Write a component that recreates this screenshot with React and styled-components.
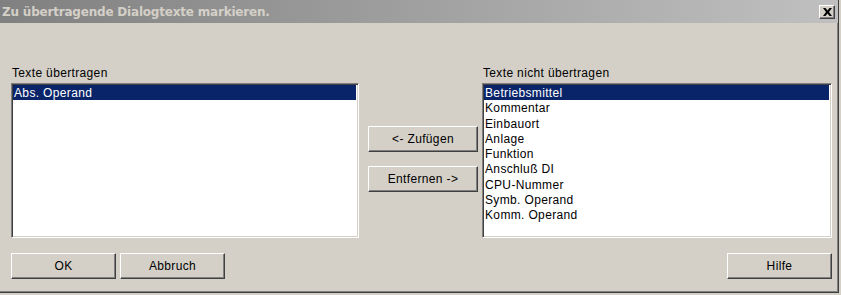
import React from 'react';
import styled, { createGlobalStyle } from 'styled-components';

const GlobalStyle = createGlobalStyle`
  body {
    margin: 0;
    background: #d4d0c8;
    font-family: 'Liberation Sans', Arial, sans-serif;
  }
`;

const leftItems = ['Abs. Operand'];
const rightItems = [
  'Betriebsmittel',
  'Kommentar',
  'Einbauort',
  'Anlage',
  'Funktion',
  'Anschluß DI',
  'CPU-Nummer',
  'Symb. Operand',
  'Komm. Operand',
];

const App = () => {
  return (
    <>
      <GlobalStyle />
      <Window>
        <TitleBar>
          <Title>Zu übertragende Dialogtexte markieren.</Title>
          <CloseButton>
            <svg width="9" height="8" viewBox="0 0 9 8">
              <path d="M0 0h2.5l2 2.5 2-2.5H9L6 4l3 4H6.5l-2-2.5-2 2.5H0l3-4z" fill="#000" />
            </svg>
          </CloseButton>
        </TitleBar>

        <Body>
          <Lists>
            <Column $width={348}>
              <Label>Texte übertragen</Label>
              <ListBox>
                {leftItems.map((item, i) => (
                  <Row key={item} $selected={i === 0}>{item}</Row>
                ))}
              </ListBox>
            </Column>

            <Middle>
              <Button $width={110}>&lt;- Zufügen</Button>
              <Button $width={110}>Entfernen -&gt;</Button>
            </Middle>

            <Column $width={350}>
              <Label>Texte nicht übertragen</Label>
              <ListBox>
                {rightItems.map((item, i) => (
                  <Row key={item} $selected={i === 0}>{item}</Row>
                ))}
              </ListBox>
            </Column>
          </Lists>

          <Footer>
            <Button $width={105}>OK</Button>
            <Button $width={105}>Abbruch</Button>
            <Spacer />
            <Button $width={105}>Hilfe</Button>
          </Footer>
        </Body>
      </Window>
    </>
  );
};

export default App;

const Window = styled.div`
  width: 839px;
  height: 293px;
  box-sizing: border-box;
  background: #d4d0c8;
  border-right: 1px solid #404040;
  border-bottom: 1px solid #404040;
  box-shadow: inset -1px -1px #808080;
  display: flex;
  flex-direction: column;
`;

const TitleBar = styled.div`
  height: 23px;
  flex-shrink: 0;
  display: flex;
  align-items: center;
  justify-content: space-between;
  padding: 0 3px 0 2px;
  background: linear-gradient(to right, #808080, #c0c0c0);
`;

const Title = styled.span`
  color: #d4d0c8;
  font-family: 'DejaVu Sans', 'Liberation Sans', sans-serif;
  font-weight: bold;
  font-size: 12px;
  letter-spacing: -0.2px;
  padding-top: 1px;
`;

const CloseButton = styled.div`
  width: 16px;
  height: 14px;
  box-sizing: border-box;
  margin-top: 1px;
  background: #d4d0c8;
  border-top: 1px solid #fff;
  border-left: 1px solid #fff;
  border-right: 1px solid #404040;
  border-bottom: 1px solid #404040;
  box-shadow: inset -1px -1px #808080;
  display: flex;
  align-items: center;
  justify-content: center;
`;

const Body = styled.div`
  flex: 1;
  display: flex;
  flex-direction: column;
  padding: 43px 6px 0 11px;
  letter-spacing: 0.35px;
`;

const Lists = styled.div`
  display: flex;
  align-items: flex-start;
`;

const Column = styled.div`
  width: ${(p) => p.$width}px;
  display: flex;
  flex-direction: column;
`;

const Label = styled.div`
  height: 17px;
  font-size: 12px;
  line-height: 14px;
  padding-left: 1px;
  color: #000;
`;

const ListBox = styled.div`
  height: 155px;
  box-sizing: border-box;
  background: #fff;
  border-top: 1px solid #808080;
  border-left: 1px solid #808080;
  border-right: 1px solid #fff;
  border-bottom: 1px solid #fff;
  box-shadow: inset 1px 1px #404040, inset -1px -1px #d4d0c8;
  padding: 1px 2px 2px 1px;
`;

const Row = styled.div`
  height: 15.3px;
  line-height: 16px;
  font-size: 12px;
  padding-left: 1px;
  white-space: nowrap;
  background: ${(p) => (p.$selected ? '#0a246a' : 'transparent')};
  color: ${(p) => (p.$selected ? '#fff' : '#000')};
`;

const Middle = styled.div`
  display: flex;
  flex-direction: column;
  gap: 14px;
  padding-top: 60px;
  margin: 0 4px 0 9px;
`;

const Button = styled.div`
  width: ${(p) => p.$width}px;
  height: 26px;
  box-sizing: border-box;
  background: #d4d0c8;
  border-top: 1px solid #fff;
  border-left: 1px solid #fff;
  border-right: 1px solid #404040;
  border-bottom: 1px solid #404040;
  box-shadow: inset -1px -1px #808080;
  display: flex;
  align-items: center;
  justify-content: center;
  font-size: 12px;
  color: #000;
`;

const Footer = styled.div`
  display: flex;
  gap: 4px;
  margin-top: 15px;
`;

const Spacer = styled.div`
  flex: 1;
`;
